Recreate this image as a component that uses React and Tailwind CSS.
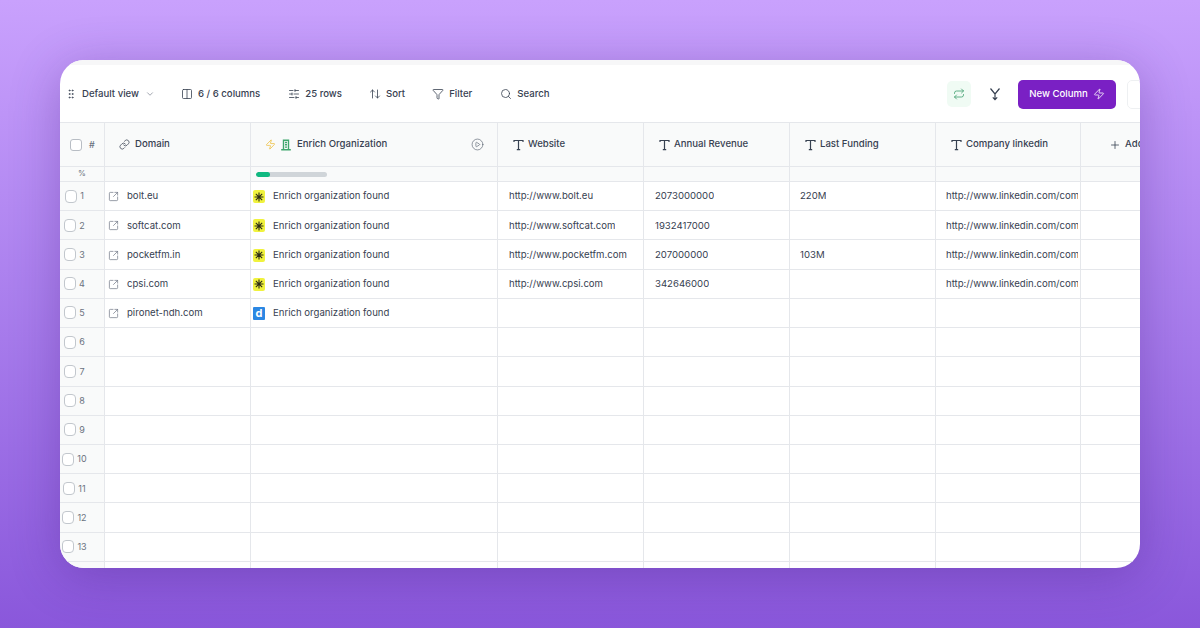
import React from 'react';
import {
  GripVertical,
  ChevronDown,
  Columns2,
  SlidersHorizontal,
  ArrowUpDown,
  Funnel,
  Search,
  Link,
  Zap,
  CirclePlay,
  SquareArrowOutUpRight,
  Repeat,
  Plus,
} from 'lucide-react';

const LINKEDIN = 'http://www.linkedin.com/company';

const rows = [
  { domain: 'bolt.eu', logo: 'star', site: 'http://www.bolt.eu', revenue: '2073000000', funding: '220M', linkedin: LINKEDIN },
  { domain: 'softcat.com', logo: 'star', site: 'http://www.softcat.com', revenue: '1932417000', funding: '', linkedin: LINKEDIN },
  { domain: 'pocketfm.in', logo: 'star', site: 'http://www.pocketfm.com', revenue: '207000000', funding: '103M', linkedin: LINKEDIN },
  { domain: 'cpsi.com', logo: 'star', site: 'http://www.cpsi.com', revenue: '342646000', funding: '', linkedin: LINKEDIN },
  { domain: 'pironet-ndh.com', logo: 'd', site: '', revenue: '', funding: '', linkedin: '' },
  {}, {}, {}, {}, {}, {}, {}, {}, {},
];

const gridCols = 'grid grid-cols-[45px_146px_247px_146px_146px_146px_145px_59px]';

// serif T used by the text columns
const TextIcon = () => (
  <svg width="11" height="12" viewBox="0 0 11 12" fill="none" stroke="#374151" strokeWidth="1.2" className="shrink-0">
    <path d="M1 3V1.5h9V3M5.5 1.5v9.2M3.8 10.7h3.4" />
  </svg>
);

const StarLogo = () => (
  <span className="flex h-[13px] w-[12px] shrink-0 items-center justify-center rounded-[2px] bg-[#f0f23e]">
    <svg width="10" height="10" viewBox="0 0 10 10" stroke="#2b2b14" strokeWidth="1.1">
      <path d="M5 .5v9M.5 5h9M1.8 1.8l6.4 6.4M8.2 1.8 1.8 8.2" />
    </svg>
  </span>
);

const DLogo = () => (
  <span className="flex h-[13px] w-[12px] shrink-0 items-center justify-center rounded-[1px] bg-[#2b87e3] text-[11px] leading-none font-bold text-white">
    d
  </span>
);

const ToolItem = ({ icon, label, className }) => (
  <div className={`flex items-center gap-[5px] ${className}`}>
    {icon}
    <span>{label}</span>
  </div>
);

const HeadCell = ({ label }) => (
  <div className="flex items-center gap-[4px] border-r border-[#e5e7eb] pl-[15px] whitespace-nowrap">
    <TextIcon />
    <span>{label}</span>
  </div>
);

const Cell = ({ children, className }) => (
  <div className={`flex items-center border-r border-b border-[#e5e7eb] pt-[1px] pr-[2px] whitespace-nowrap ${className}`}>
    <span className="block overflow-hidden">{children}</span>
  </div>
);

export default function App() {
  return (
    <div className="h-[628px] w-full overflow-hidden bg-gradient-to-b from-[#c9a1fd] to-[#8a57db] px-[60px] pt-[60px] font-['Inter','Liberation_Sans',sans-serif]">
      <div className="flex h-[508px] flex-col overflow-hidden rounded-[24px] bg-white shadow-[0_8px_50px_rgba(60,20,120,0.3)]">
        {/* 工具栏 */}
        <div className="h-[5px] shrink-0 bg-[#f7f7f8]" />
        <div className="flex h-[57px] shrink-0 items-center pt-[1px] text-[9.6px] font-medium text-[#374151]">
          <GripVertical size={12} strokeWidth={1.6} className="ml-[5px] shrink-0 text-[#374151]" />
          <span className="ml-[5px]">Default view</span>
          <ChevronDown size={10} strokeWidth={1.5} className="ml-[6px] text-[#6b7280]" />
          <ToolItem className="ml-[26px]" icon={<Columns2 size={12} strokeWidth={1.6} />} label="6 / 6 columns" />
          <ToolItem className="ml-[28px]" icon={<SlidersHorizontal size={12} strokeWidth={1.6} />} label="25 rows" />
          <ToolItem className="ml-[27px]" icon={<ArrowUpDown size={12} strokeWidth={1.6} />} label="Sort" />
          <ToolItem className="ml-[27px]" icon={<Funnel size={12} strokeWidth={1.6} />} label="Filter" />
          <ToolItem className="ml-[28px]" icon={<Search size={12} strokeWidth={1.6} />} label="Search" />
          <div className="ml-auto flex h-[26px] w-[24px] items-center justify-center rounded-[5px] bg-[#f0fbf4]">
            <Repeat size={12} strokeWidth={1.6} className="text-[#3f9f6e]" />
          </div>
          <svg width="12" height="14" viewBox="0 0 12 14" fill="none" stroke="#374151" strokeWidth="1.2" className="ml-[18px]">
            <path d="M1.5 1.5 6 7l4.5-5.5M6 7v5.5M3.8 10.4 6 12.7l2.2-2.3" />
          </svg>
          <button className="ml-[17px] flex h-[29px] w-[98px] items-center justify-center gap-[5px] rounded-[5px] bg-[#7a20c4] text-[9.6px] font-medium text-white">
            New Column
            <Zap size={12} strokeWidth={1.6} />
          </button>
          <div className="mr-[-13px] ml-[11px] h-[29px] w-[26px] shrink-0 rounded-[5px] border border-[#eef0f2]" />
        </div>

        {/* 表头 */}
        <div className={`${gridCols} h-[45px] shrink-0 border-t border-b border-[#e5e7eb] bg-[#f9fafa] text-[9.6px] font-medium text-[#374151]`}>
          <div className="flex items-center border-r border-[#e5e7eb] pl-[10px]">
            <span className="h-[12px] w-[12px] rounded-[3px] border border-[#b8bdc4] bg-white" />
            <span className="ml-[7px] text-[9px] text-[#6b7280]">#</span>
          </div>
          <div className="flex items-center gap-[5px] border-r border-[#e5e7eb] pl-[14px]">
            <Link size={11} strokeWidth={1.6} className="shrink-0" />
            <span>Domain</span>
          </div>
          <div className="flex items-center border-r border-[#e5e7eb] pl-[14px]">
            <Zap size={11} strokeWidth={1.8} className="shrink-0 text-[#eec24a]" />
            <svg width="12" height="12" viewBox="0 0 12 12" fill="none" stroke="#3fa66c" strokeWidth="1.4" className="ml-[4px] shrink-0">
              <path d="M3.5 10.8V1.2h5v9.6M1.2 10.8h9.6M5 3.5h2M5 5.8h2M5 8.1h2" />
            </svg>
            <span className="ml-[5px]">Enrich Organization</span>
            <CirclePlay size={13} strokeWidth={1.1} className="mr-[13px] ml-auto shrink-0 text-[#4b5563]" />
          </div>
          <HeadCell label="Website" />
          <HeadCell label="Annual Revenue" />
          <HeadCell label="Last Funding" />
          <HeadCell label="Company linkedin" />
          <div className="flex items-center gap-[4px] pl-[28px] whitespace-nowrap">
            <Plus size={12} strokeWidth={1.6} className="shrink-0" />
            <span>Add</span>
          </div>
        </div>

        {/* 进度行 */}
        <div className={`${gridCols} h-[15px] shrink-0 border-b border-[#e5e7eb] bg-[#f9fafa]`}>
          <div className="border-r border-[#e5e7eb] text-center text-[8px] leading-[13px] text-[#6b7280]">%</div>
          <div className="border-r border-[#e5e7eb]" />
          <div className="flex items-center border-r border-[#e5e7eb] pl-[5px]">
            <div className="h-[5px] w-[71px] overflow-hidden rounded-full bg-[#d0d5d9]">
              <div className="h-full w-[14px] rounded-full bg-[#10b981]" />
            </div>
          </div>
          <div className="border-r border-[#e5e7eb]" />
          <div className="border-r border-[#e5e7eb]" />
          <div className="border-r border-[#e5e7eb]" />
          <div className="border-r border-[#e5e7eb]" />
          <div />
        </div>

        {/* 数据行 */}
        {rows.map((row, i) => (
          <div key={i} className={`${gridCols} h-[29.23px] shrink-0 text-[9.6px] text-[#374151]`}>
            <div className="border-r border-b border-[#e5e7eb] bg-[#f9fafa]">
              <div className="flex h-full w-[29px] items-center justify-center gap-[3px]">
                <span className="h-[13px] w-[12px] shrink-0 rounded-[4px] border border-[#c2c7cd] bg-white" />
                <span className="text-[9px] text-[#6b7280]">{i + 1}</span>
              </div>
            </div>
            <div className="flex items-center border-r border-b border-[#e5e7eb] pt-[1px] pl-[3px]">
              {row.domain && (
                <>
                  <SquareArrowOutUpRight size={11} strokeWidth={1.5} className="text-[#6b7280]" />
                  <span className="ml-[8px]">{row.domain}</span>
                </>
              )}
            </div>
            <div className="flex items-center border-r border-b border-[#e5e7eb] pt-[1px] pl-[2px]">
              {row.logo && (
                <>
                  {row.logo === 'star' ? <StarLogo /> : <DLogo />}
                  <span className="ml-[8px]">Enrich organization found</span>
                </>
              )}
            </div>
            <Cell className="pl-[11px]">{row.site}</Cell>
            <Cell className="pl-[11px]">{row.revenue}</Cell>
            <Cell className="pl-[10px]">{row.funding}</Cell>
            <Cell className="pl-[10px]">{row.linkedin}</Cell>
            <div className="border-b border-[#e5e7eb]" />
          </div>
        ))}
      </div>
    </div>
  );
}
